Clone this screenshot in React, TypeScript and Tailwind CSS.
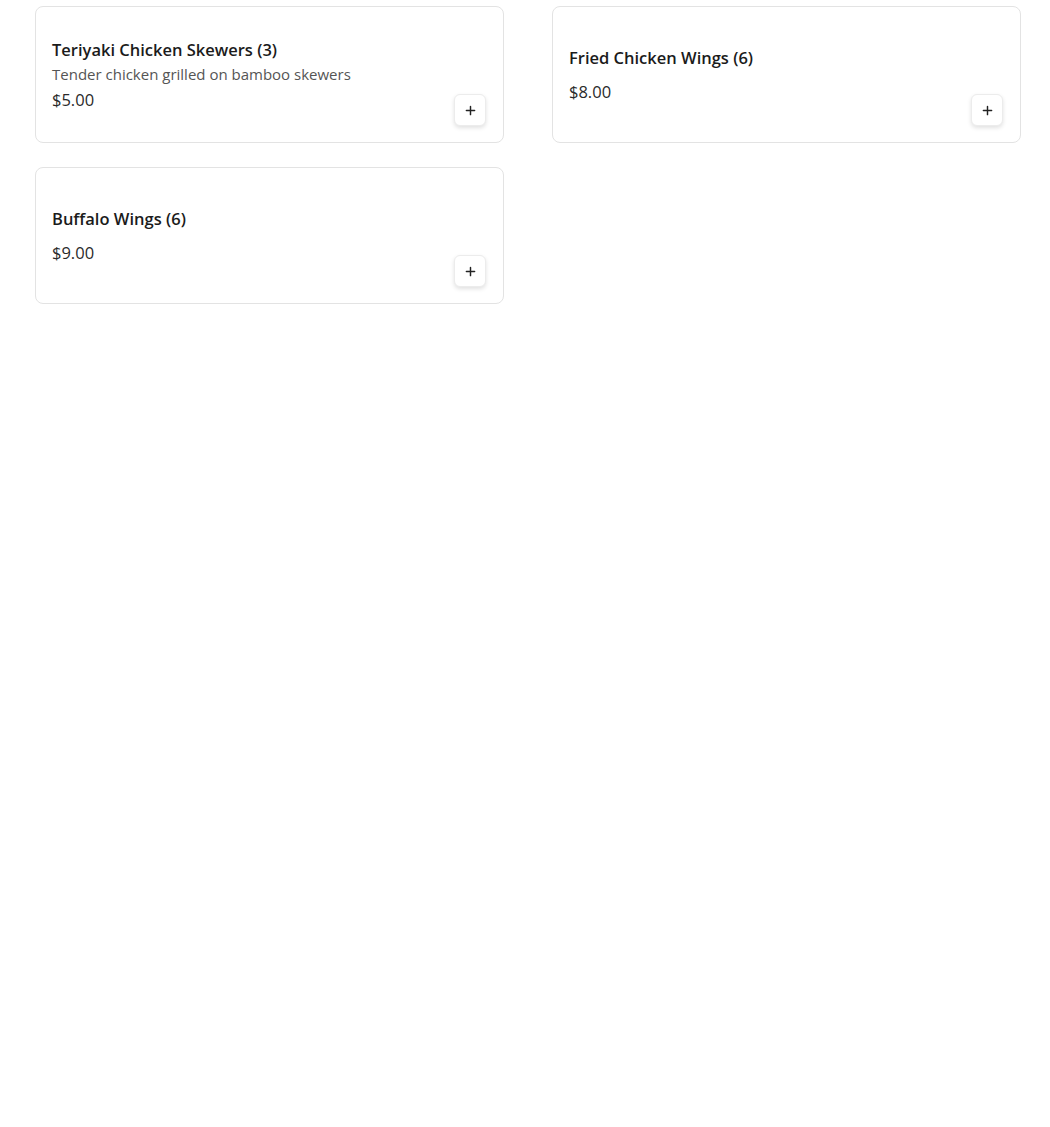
import React from 'react'

type Item = { name: string; description?: string; price: string }

const items: Item[] = [
  { name: 'Teriyaki Chicken Skewers (3)', description: 'Tender chicken grilled on bamboo skewers', price: '$5.00' },
  { name: 'Fried Chicken Wings (6)', price: '$8.00' },
  { name: 'Buffalo Wings (6)', price: '$9.00' },
]

function PlusIcon() {
  return (
    <svg className="w-[11px] h-[11px] text-[#222]" viewBox="0 0 12 12" fill="none" stroke="currentColor" strokeWidth="1.6" strokeLinecap="round">
      <path d="M6 1.5v9M1.5 6h9" />
    </svg>
  )
}

function MenuCard({ name, description, price }: Item) {
  return (
    <div className="h-[137px] flex items-stretch justify-between rounded-lg border border-[#e3e3e3] bg-white p-4">
      <div className="flex flex-col justify-center">
        <h3 className="text-[16.5px] font-semibold leading-6 text-[#1b1b1b]">{name}</h3>
        {description && <p className="mt-0.5 text-[15px] leading-5 text-[#555]">{description}</p>}
        <p className={`${description ? 'mt-1' : 'mt-2.5'} text-[16.5px] leading-6 text-[#2a2a2a]`}>{price}</p>
      </div>
      <div className="flex items-end">
        <button className="mr-px flex w-8 h-8 items-center justify-center rounded-md border border-[#ececec] bg-white shadow-[0_2px_4px_rgba(0,0,0,0.12)]">
          <PlusIcon />
        </button>
      </div>
    </div>
  )
}

export default function App() {
  return (
    <div className="min-h-[1127px] bg-white font-['Open_Sans',sans-serif]">
      <div className="grid grid-cols-2 gap-x-[48px] gap-y-6 pl-[35px] pr-[29px] pt-1.5">
        {items.map((item) => (
          <MenuCard key={item.name} {...item} />
        ))}
      </div>
    </div>
  )
}
